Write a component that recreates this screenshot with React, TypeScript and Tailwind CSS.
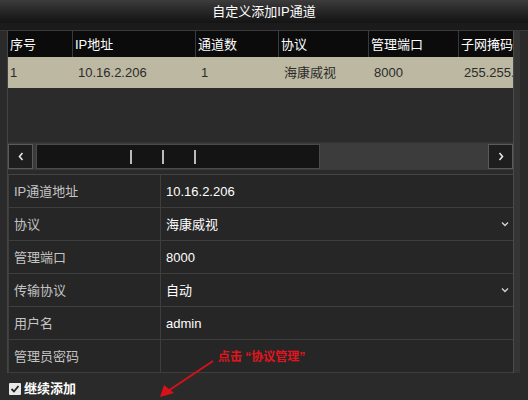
import React from "react";

const cols = [
  { label: "序号", value: "1", w: "w-[64px]" },
  { label: "IP地址", value: "10.16.2.206", w: "w-[123px]" },
  { label: "通道数", value: "1", w: "w-[83px]" },
  { label: "协议", value: "海康威视", w: "w-[90px]" },
  { label: "管理端口", value: "8000", w: "w-[90px]" },
  { label: "子网掩码", value: "255.255.255.0", w: "w-[80px]" },
];

const fields = [
  { label: "IP通道地址", value: "10.16.2.206" },
  { label: "协议", value: "海康威视", select: true },
  { label: "管理端口", value: "8000" },
  { label: "传输协议", value: "自动", select: true },
  { label: "用户名", value: "admin" },
  { label: "管理员密码", value: "" },
];

function Chevron() {
  return (
    <svg width="8" height="6" viewBox="0 0 8 6" className="mr-[4px]">
      <path d="M1 1.5 L4 4.5 L7 1.5" stroke="#d0d0d0" strokeWidth="1.4" fill="none" />
    </svg>
  );
}

export default function App() {
  return (
    <div
      className="relative h-[400px] w-[528px] overflow-hidden bg-[#2a2a2a] text-[13px] leading-none"
      style={{ fontFamily: '"Liberation Sans", "Noto Sans CJK SC", sans-serif' }}
    >
      {/* title bar */}
      <div className="flex h-[23px] items-center justify-center bg-gradient-to-b from-[#3c3c3c] via-[#262626] to-[#141414] text-white">
        自定义添加IP通道
      </div>
      <div className="h-[8px] border-b border-[#3a3a3a] bg-[#1b1b1b]" />

      <div className="flex">
        <div className="w-[8px] shrink-0 border-r border-[#444]" />
        <div className="w-[505px] shrink-0">
          {/* list table */}
          <div className="flex h-[26px] overflow-hidden bg-[#0b0b0b] text-white">
            {cols.map((c, i) => (
              <div
                key={c.label}
                className={`${c.w} flex shrink-0 items-center pl-[2px] ${i > 0 ? "border-l border-[#3a3a3a]" : ""}`}
              >
                {c.label}
              </div>
            ))}
          </div>
          <div className="flex h-[31px] overflow-hidden bg-[#bdb8a1] text-[#2b2b2b]">
            {cols.map((c, i) => (
              <div key={c.label} className={`${c.w} flex shrink-0 items-center ${i === 0 ? "pl-[2px]" : "pl-[6px]"}`}>
                {c.value}
              </div>
            ))}
          </div>
          <div className="h-[55px] border-b border-[#353535] bg-[#2b2b2b]" />

          {/* horizontal scrollbar */}
          <div className="flex h-[27px] items-stretch bg-[#3a3a3a] py-[1px]">
            <div className="flex w-[25px] items-center justify-center border border-[#5a5a5a] bg-[#1e1e1e] text-[#e0e0e0]">
              <svg width="6" height="9" viewBox="0 0 6 9">
                <path d="M4.5 1 L1.5 4.5 L4.5 8" stroke="#e6e6e6" strokeWidth="1.6" fill="none" />
              </svg>
            </div>
            <div className="ml-[3px] flex w-[284px] items-center border border-[#4a4a4a] bg-[#141414]">
              <div className="ml-[93px] h-[14px] w-[2px] bg-[#bbb]" />
              <div className="ml-[30px] h-[14px] w-[2px] bg-[#bbb]" />
              <div className="ml-[30px] h-[14px] w-[2px] bg-[#bbb]" />
            </div>
            <div className="flex-1 bg-[#3c3c3c]" />
            <div className="flex w-[25px] items-center justify-center border border-[#5a5a5a] bg-[#1e1e1e]">
              <svg width="6" height="9" viewBox="0 0 6 9">
                <path d="M1.5 1 L4.5 4.5 L1.5 8" stroke="#e6e6e6" strokeWidth="1.6" fill="none" />
              </svg>
            </div>
          </div>
          <div className="h-[5px] border-b border-[#444]" />

          {/* form */}
          <div className="border-l border-[#3e3e3e] bg-[#262626]">
            {fields.map((f) => (
              <div key={f.label} className="flex h-[33px] border-b border-[#3e3e3e]">
                <div className="flex w-[152px] shrink-0 items-center border-r border-[#3e3e3e] pl-[5px] text-[#c4c4c4]">
                  {f.label}
                </div>
                <div className="flex flex-1 items-center justify-between pl-[5px] text-white">
                  <span>{f.value}</span>
                  {f.select && <Chevron />}
                </div>
              </div>
            ))}
          </div>
        </div>
        <div className="w-[7px] shrink-0 border-l border-[#4a4a4a] bg-[#353535]" />
      </div>

      {/* continue add */}
      <div className="mt-[9px] flex items-center gap-[3px] pl-[9px] font-bold text-white">
        <span className="flex h-[12px] w-[12px] items-center justify-center rounded-[1px] bg-[#e8e8e8]">
          <svg width="10" height="10" viewBox="0 0 10 10">
            <path d="M1.5 5 L4 7.5 L8.5 2" stroke="#222" strokeWidth="1.8" fill="none" />
          </svg>
        </span>
        继续添加
      </div>

      {/* annotation overlay */}
      <div className="absolute left-[218px] top-[351px] text-[12px] font-bold text-[#e3141e]">
        点击 “协议管理”
      </div>
      <svg className="absolute left-[150px] top-[355px]" width="70" height="45" viewBox="0 0 70 45">
        <path d="M63 6 L18 36" stroke="#d8101a" strokeWidth="2" />
        <path d="M10 42 L14 30 L24 38 Z" fill="#d8101a" />
      </svg>
    </div>
  );
}
